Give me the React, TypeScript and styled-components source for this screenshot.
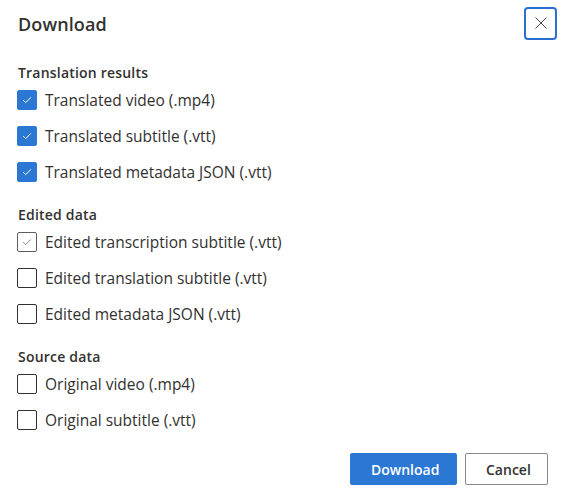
import React from "react";
import styled, { createGlobalStyle } from "styled-components";

type Option = {
  label: string;
  state: "checked" | "unchecked" | "muted";
};

type Section = {
  title: string;
  options: Option[];
};

const SECTIONS: Section[] = [
  {
    title: "Translation results",
    options: [
      { label: "Translated video (.mp4)", state: "checked" },
      { label: "Translated subtitle (.vtt)", state: "checked" },
      { label: "Translated metadata JSON (.vtt)", state: "checked" },
    ],
  },
  {
    title: "Edited data",
    options: [
      { label: "Edited transcription subtitle (.vtt)", state: "muted" },
      { label: "Edited translation subtitle (.vtt)", state: "unchecked" },
      { label: "Edited metadata JSON (.vtt)", state: "unchecked" },
    ],
  },
  {
    title: "Source data",
    options: [
      { label: "Original video (.mp4)", state: "unchecked" },
      { label: "Original subtitle (.vtt)", state: "unchecked" },
    ],
  },
];

const GlobalStyle = createGlobalStyle`
  body {
    margin: 0;
    background: #ffffff;
    font-family: "Segoe UI", "Open Sans", "Noto Sans", sans-serif;
    color: #323130;
  }
`;

const Dialog = styled.div`
  width: 567px;
  height: 504px;
  box-sizing: border-box;
  display: flex;
  flex-direction: column;
`;

const Header = styled.div`
  height: 48px;
  display: flex;
  align-items: center;
  justify-content: space-between;
  padding: 0 10px 0 18px;
`;

const Title = styled.h2`
  margin: 0;
  font-size: 18px;
  font-weight: 600;
  line-height: 28px;
  letter-spacing: 0.1px;
  color: #323130;
`;

const CloseButton = styled.button`
  width: 33px;
  height: 33px;
  margin-top: -2px;
  padding: 0;
  display: flex;
  align-items: center;
  justify-content: center;
  background: #ffffff;
  border: 2px solid #2b6fd3;
  border-radius: 4px;
  color: #605e5c;
`;

const Body = styled.div`
  display: flex;
  flex-direction: column;
  gap: 15px;
  padding: 15px 18px 0 17px;
`;

const Group = styled.div`
  display: flex;
  flex-direction: column;
`;

const GroupTitle = styled.div`
  font-size: 14px;
  font-weight: 600;
  line-height: 19px;
  letter-spacing: 0.2px;
  padding-left: 1px;
`;

const Row = styled.label`
  height: 36px;
  display: flex;
  align-items: center;
  gap: 8px;
  font-size: 15.5px;
`;

const Box = styled.span<{ $state: Option["state"] }>`
  width: 20px;
  height: 20px;
  flex: none;
  box-sizing: border-box;
  border-radius: 2px;
  display: flex;
  align-items: center;
  justify-content: center;
  background: ${(p) => (p.$state === "checked" ? "#2b78d4" : "#ffffff")};
  border: 1px solid
    ${(p) =>
      p.$state === "checked"
        ? "#2b78d4"
        : p.$state === "muted"
        ? "#605e5c"
        : "#323130"};
`;

const Footer = styled.div`
  display: flex;
  justify-content: flex-end;
  gap: 8px;
  padding: 15px 19px 0 0;
`;

const Button = styled.button<{ $primary?: boolean }>`
  height: 32px;
  padding: 0 20px;
  box-sizing: border-box;
  border-radius: 2px;
  font-family: inherit;
  font-size: 14px;
  font-weight: 600;
  background: ${(p) => (p.$primary ? "#2b78d4" : "#ffffff")};
  color: ${(p) => (p.$primary ? "#ffffff" : "#323130")};
  border: 1px solid ${(p) => (p.$primary ? "#2b78d4" : "#8a8886")};
`;

const Check = ({ color }: { color: string }) => (
  <svg width="12" height="12" viewBox="0 0 12 12" fill="none">
    <path d="M2.2 6.2 L4.8 8.6 L9.8 3.4" stroke={color} strokeWidth="1" />
  </svg>
);

const Checkbox = ({ state }: { state: Option["state"] }) => (
  <Box $state={state}>
    {state === "checked" ? <Check color="#ffffff" /> : null}
    {state === "muted" ? <Check color="#8a8886" /> : null}
  </Box>
);

export default function App() {
  return (
    <>
      <GlobalStyle />
      <Dialog>
        <Header>
          <Title>Download</Title>
          <CloseButton aria-label="Close">
            <svg width="14" height="14" viewBox="0 0 14 14">
              <path d="M1.5 1.5 L12.5 12.5 M12.5 1.5 L1.5 12.5" stroke="#484644" strokeWidth="1" />
            </svg>
          </CloseButton>
        </Header>
        <Body>
          {SECTIONS.map((section) => (
            <Group key={section.title}>
              <GroupTitle>{section.title}</GroupTitle>
              {section.options.map((opt) => (
                <Row key={opt.label}>
                  <Checkbox state={opt.state} />
                  <span>{opt.label}</span>
                </Row>
              ))}
            </Group>
          ))}
        </Body>
        <Footer>
          <Button $primary style={{ width: 107 }}>Download</Button>
          <Button style={{ width: 83 }}>Cancel</Button>
        </Footer>
      </Dialog>
    </>
  );
}
